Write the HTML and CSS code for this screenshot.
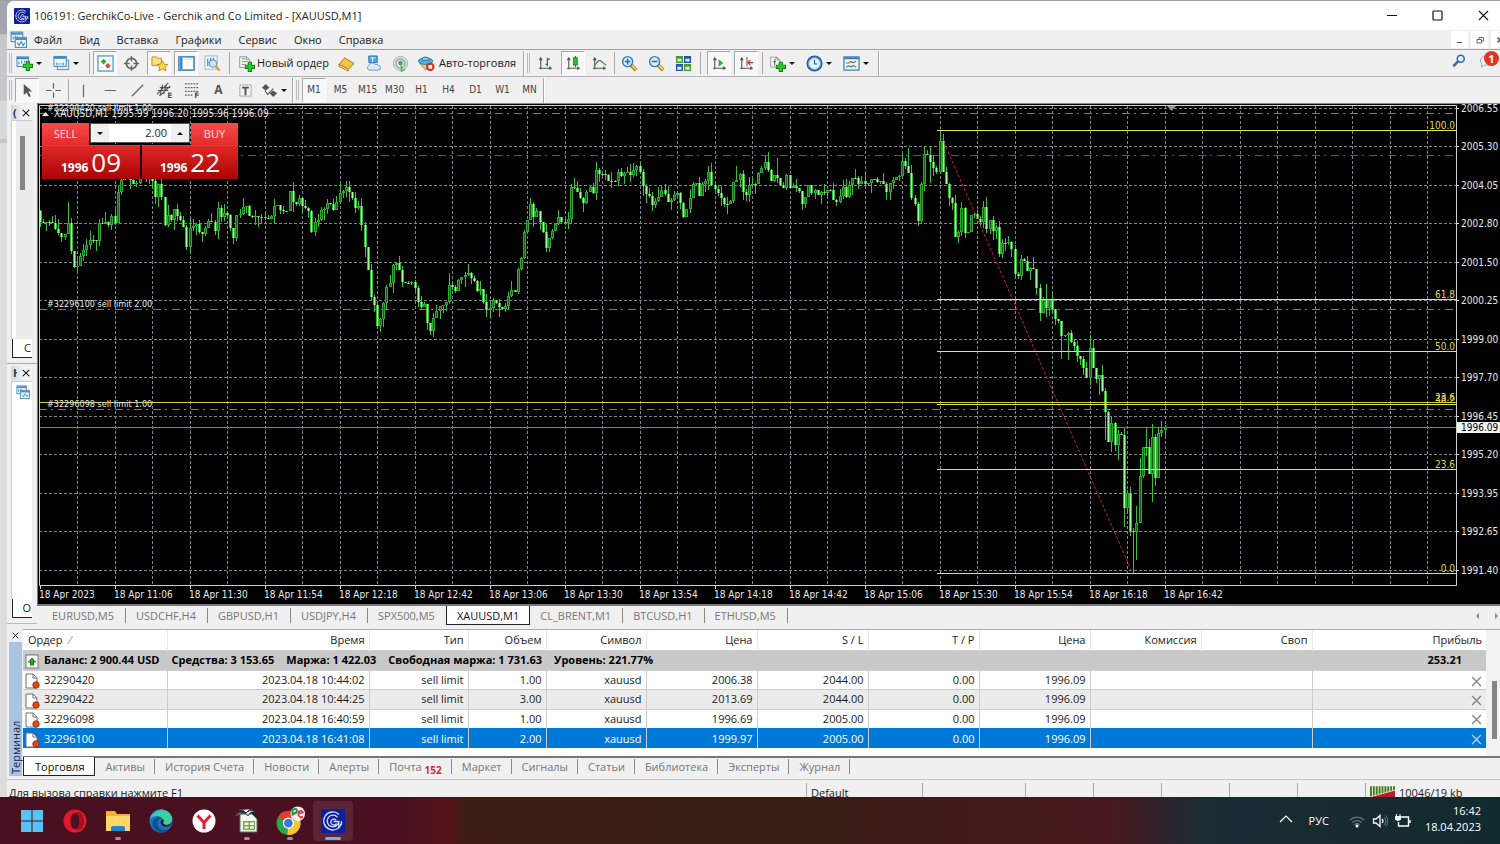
FILE: index.html
```html
<!DOCTYPE html>
<html lang="ru">
<head>
<meta charset="utf-8">
<title>106191: GerchikCo-Live - Gerchik and Co Limited - [XAUUSD,M1]</title>
<link rel="stylesheet" href="styles.css">
</head>
<body>
<svg class="defs" aria-hidden="true">
  <defs>
    <symbol id="logo" viewBox="0 0 24 24"><rect width="24" height="24" rx="1" fill="#0c1f9c"/><path d="M18 5.500A9 9 0 1 0 20.500 14M16.500 8.300A5.800 5.800 0 1 0 17.800 12.500H12.500M15 11a3 3 0 1 0 .5 3.500M20.500 12v4M17.800 12.500v5" fill="none" stroke="#d6dcf6" stroke-width="1.300"/></symbol>
    <symbol id="chartwin" viewBox="0 0 16 16"><rect x="1" y="1" width="11" height="9" fill="#eaf4fc" stroke="#4a8fc4"/><path d="M1 2.500h11" stroke="#4a8fc4" stroke-width="2"/><path d="M3 8V5M5 7.500V4.500M7 7V5" stroke="#4a8fc4"/><rect x="5" y="6" width="10.500" height="9.500" fill="#eaf4fc" stroke="#4a8fc4"/><path d="M5 7.500h10.500" stroke="#4a8fc4" stroke-width="2"/><path d="M7 11l1.500 2.500L10.500 10l2 3.500L14 11" fill="none" stroke="#4a8fc4"/></symbol>
    <symbol id="plus" viewBox="0 0 10 10"><path d="M3.500.5h3v3h3v3h-3v3h-3v-3h-3v-3h3z" fill="#2fd02a" stroke="#0b8412"/></symbol>
    <symbol id="page" viewBox="0 0 16 16"><path d="M1 1h9l4 4v10H1z" fill="#f4f4f4" stroke="#808080"/><path d="M10 1v4h4" fill="none" stroke="#808080"/></symbol>
    <symbol id="axes" viewBox="0 0 16 16"><path d="M3 2v12M1 13h13M1.500 4.500L3 2l1.500 2.500M12 11.500l2 1.500-2 1.500" fill="none" stroke="#555" stroke-width="1.200"/></symbol>
    <symbol id="lens" viewBox="0 0 18 18"><path d="M10.500 10.500l5.500 5.500" stroke="#a87d18" stroke-width="4"/><path d="M11 10.500l5 5" stroke="#f6d258" stroke-width="2"/><circle cx="7" cy="7" r="5.300" fill="#d7efff" stroke="#3579bd" stroke-width="1.500"/></symbol>
    <symbol id="order" viewBox="0 0 16 16"><path d="M2 1h7l4 4v10H2z" fill="#fff" stroke="#6d6d6d"/><path d="M9 1v4h4" fill="none" stroke="#6d6d6d"/><circle cx="12" cy="12" r="3.200" fill="#e14a18" stroke="#a02c10"/></symbol>
    <symbol id="cross" viewBox="0 0 10 10"><path d="M1 1l8 8M9 1L1 9" stroke="currentColor" stroke-width="1.300"/></symbol>
  </defs>
</svg>

<div class="desktop">
<div class="window">
  <header class="titlebar">
    <svg class="title-logo"><use href="#logo"/></svg>
    <h1 class="title">106191: GerchikCo-Live - Gerchik and Co Limited - [XAUUSD,M1]</h1>
    <div class="win-controls">
      <button aria-label="Свернуть"><svg viewBox="0 0 11 11"><path d="M1 5.500h10" stroke="#111"/></svg></button>
      <button aria-label="Развернуть"><svg viewBox="0 0 11 11"><rect x="1" y="1" width="9" height="9" rx="1" fill="none" stroke="#111" stroke-width="1.200"/></svg></button>
      <button aria-label="Закрыть"><svg viewBox="0 0 11 11"><path d="M1 1l9 9M10 1l-9 9" stroke="#111" stroke-width="1.100"/></svg></button>
    </div>
  </header>

  <nav class="menubar">
    <svg class="menu-icon"><use href="#chartwin"/></svg>
    <button>Файл</button><button>Вид</button><button>Вставка</button><button>Графики</button><button>Сервис</button><button>Окно</button><button>Справка</button>
    <div class="mdi">
      <button aria-label="Свернуть график"><svg viewBox="0 0 8 8"><path d="M1 6.500h5" stroke="#555" stroke-width="1.200"/></svg></button>
      <button aria-label="Восстановить график"><svg viewBox="0 0 8 8"><path d="M3 3V1.500h4.500V5H6M1 3.500h4.500V7H1z" fill="none" stroke="#667"/></svg></button>
      <button aria-label="Закрыть график"><svg viewBox="0 0 8 8"><path d="M1.500 1.500l5 5M6.500 1.500l-5 5" stroke="#456" stroke-width="1.500"/></svg></button>
    </div>
  </nav>

  <div class="toolbar toolbar-main">
    <span class="grip"></span>
    <button class="tool wide" aria-label="Новый график"><svg viewBox="0 0 18 18"><rect x="1" y="2" width="12" height="10" fill="#f5fbff" stroke="#3b82bd"/><path d="M1 3.500h12" stroke="#3b82bd" stroke-width="2"/><path d="M3 10V7M6 9V6M9 8V6" stroke="#3b82bd"/><use href="#plus" x="7" y="6" width="11" height="11"/></svg><i class="caret"></i></button>
    <button class="tool wide" aria-label="Профили"><svg viewBox="0 0 18 18"><rect x="4.500" y="5.500" width="12" height="10" fill="#dcecf8" stroke="#5a8db8"/><rect x="1" y="1.500" width="13" height="10.500" fill="#f2f8fd" stroke="#3b82bd"/><path d="M1 3h13" stroke="#3b82bd" stroke-width="2"/><path d="M3 9.500h9M4 8v3M11 8v3" stroke="#6b9bc2"/></svg><i class="caret"></i></button>
    <span class="sep"></span>
    <button class="tool on" aria-label="Обзор рынка"><svg viewBox="0 0 18 18"><rect x="1" y="1" width="16" height="16" fill="#fff" stroke="#5ea2d3" stroke-width="1.500"/><path d="M7 4l3 3-3 3-3-3z" fill="#2ba82d"/><path d="M11.500 8.500l3 3-3 3-3-3z" fill="#e0472a"/><path d="M3.500 13h4M11 5h4" stroke="#c9d9e6"/></svg></button>
    <button class="tool" aria-label="Окно данных"><svg viewBox="0 0 18 18"><circle cx="9" cy="9" r="5.500" fill="none" stroke="#666" stroke-width="1.800"/><path d="M9 1v6M9 11v6M1 9h6M11 9h6" stroke="#666" stroke-width="1.500"/></svg></button>
    <button class="tool on" aria-label="Навигатор"><svg viewBox="0 0 18 18"><path d="M1 2h5l1 1.500h4V11H1z" fill="#f7e283" stroke="#b39328"/><path d="M12 6l1.800 3.700 4 .4-3 2.700.9 4-3.700-2-3.600 2 .8-4-3-2.700 4-.4z" fill="#ffd84c" stroke="#b98a16"/></svg></button>
    <button class="tool on" aria-label="Терминал"><svg viewBox="0 0 18 18"><rect x="1" y="2" width="16" height="14" fill="#fff" stroke="#3b7dbb" stroke-width="1.600"/><path d="M3.500 3v12" stroke="#3b7dbb" stroke-width="2.500"/><path d="M7 4.500h8" stroke="#b7d3ea"/></svg></button>
    <button class="tool" aria-label="Тестер стратегий"><svg viewBox="0 0 18 18"><rect x="1" y="1" width="13" height="14" fill="#f4f8fb" stroke="#9bb5c9"/><path d="M4 4v8M7 3v5M10 3v6" stroke="#5a86ad" stroke-width="1.400"/><circle cx="9.500" cy="9" r="4" fill="#cfe7f7" stroke="#4f86b5"/><path d="M12.500 12l4 4.500" stroke="#d9a52e" stroke-width="2.500"/></svg></button>
    <span class="sep sep-far"></span>
    <button class="tool text"><svg viewBox="0 0 18 18"><use href="#page" x="1" y="0" width="13" height="15"/><path d="M4 4h4M4 7h6M4 10h4" stroke="#888"/><use href="#plus" x="7" y="7" width="11" height="11"/></svg>Новый ордер</button>
    <button class="tool" aria-label="MetaEditor"><svg viewBox="0 0 18 18"><path d="M1 10l6-7 10 6-6 6z" fill="#f3c545" stroke="#a8741a"/><path d="M1 10l10 5v2L1 12z" fill="#fff1c0" stroke="#a8741a"/></svg></button>
    <button class="tool" aria-label="Виртуальный хостинг"><svg viewBox="0 0 18 18"><path d="M4 1h9v7H4z" fill="#48a9e2" stroke="#2b78b4"/><path d="M6 3h5M8 3v4" stroke="#fff"/><path d="M4 16a3 3 0 0 1 0-5 4 4 0 0 1 7-1 3 3 0 0 1 3 1 2.500 2.500 0 0 1 0 5z" fill="#dce9f6" stroke="#6b93c0"/></svg></button>
    <button class="tool" aria-label="Сигналы"><svg viewBox="0 0 18 18"><circle cx="9" cy="9" r="7.500" fill="#dfe3e6" stroke="#a4adb3"/><circle cx="9" cy="9" r="4.800" fill="none" stroke="#8ba3b3" stroke-width="1.400"/><circle cx="9" cy="8.500" r="2.300" fill="#4aa54a"/><path d="M10 9v8a8 8 0 0 0 4-2" fill="none" stroke="#52b552" stroke-width="1.500"/></svg></button>
    <button class="tool text auto"><svg viewBox="0 0 18 18"><path d="M2 9l6 7 7-6-3-3z" fill="#f2cf4e" stroke="#ad8120"/><ellipse cx="8" cy="6.500" rx="7.500" ry="3.500" fill="#5cb0e0" stroke="#2e7bad"/><path d="M4 6a4 4 0 0 1 8 0z" fill="#7cc6ef" stroke="#2e7bad"/><circle cx="13" cy="12.500" r="4.500" fill="#d92b1c"/><rect x="11" y="10.500" width="4" height="4" fill="#fff"/></svg>Авто-торговля</button>
    <span class="edge"></span>
    <span class="grip"></span>
    <button class="tool" aria-label="Бары"><svg viewBox="0 0 18 18"><use href="#axes" x="1" y="1" width="16" height="16"/><path d="M11 3v9M9 10h2M11 4.500h2.500" stroke="#1c8f1c" stroke-width="1.400"/></svg></button>
    <button class="tool on" aria-label="Свечи"><svg viewBox="0 0 18 18"><use href="#axes" x="1" y="1" width="16" height="16"/><path d="M11 1v12" stroke="#128c12" stroke-width="1.300"/><rect x="9" y="3" width="4" height="7.500" fill="#2cc72c" stroke="#128c12"/></svg></button>
    <button class="tool" aria-label="Линия"><svg viewBox="0 0 18 18"><use href="#axes" x="1" y="1" width="16" height="16"/><path d="M3 12L8 6h2l6 5" fill="none" stroke="#4b8b4b" stroke-width="1.300"/></svg></button>
    <span class="sep"></span>
    <button class="tool" aria-label="Приблизить"><svg viewBox="0 0 18 18"><use href="#lens" width="18" height="18"/><path d="M4 7h6M7 4v6" stroke="#2a6cb0" stroke-width="1.600"/></svg></button>
    <button class="tool" aria-label="Отдалить"><svg viewBox="0 0 18 18"><use href="#lens" width="18" height="18"/><path d="M4 7h6" stroke="#2a6cb0" stroke-width="1.600"/></svg></button>
    <button class="tool" aria-label="Упорядочить окна"><svg viewBox="0 0 18 18"><path d="M1 1h7.500v7.500H1zM9.500 9.500H17V17H9.500z" fill="#4a9a28"/><path d="M9.500 1H17v7.500H9.500zM1 9.500h7.500V17H1z" fill="#2553b5"/><path d="M2.500 4h4.500v3H2.500zM11 4h4.500v3H11zM2.500 12.500h4.500v3H2.500zM11 12.500h4.500v3H11z" fill="#e2eef5"/></svg></button>
    <span class="sep sep-far"></span>
    <button class="tool on" aria-label="Автопрокрутка"><svg viewBox="0 0 18 18"><use href="#axes" x="1" y="1" width="16" height="16"/><path d="M8 4.500l5 4-5 4z" fill="#2cb32c"/></svg></button>
    <button class="tool on" aria-label="Сдвиг графика"><svg viewBox="0 0 18 18"><use href="#axes" x="1" y="1" width="16" height="16"/><path d="M9.500 2v10" stroke="#555"/><path d="M16 8h-5M13 5.500L10.500 8l2.500 2.500" fill="none" stroke="#c03a20" stroke-width="1.400"/></svg></button>
    <span class="sep sep-far"></span>
    <button class="tool wide" aria-label="Индикаторы"><svg viewBox="0 0 18 18"><use href="#page" x="1" y="1" width="12" height="13"/><path d="M8 4c-2 0-2 1-2 3v4M4.500 7h3" stroke="#555" fill="none"/><use href="#plus" x="7" y="7" width="11" height="11"/></svg><i class="caret"></i></button>
    <button class="tool wide" aria-label="Периоды"><svg viewBox="0 0 18 18"><circle cx="9" cy="9" r="7.200" fill="#e4f4ff" stroke="#1f5fa8" stroke-width="2.600"/><circle cx="9" cy="9" r="6.500" fill="none" stroke="#6fb4ec"/><path d="M9 5v4.500h3" fill="none" stroke="#456" stroke-width="1.200"/></svg><i class="caret"></i></button>
    <button class="tool wide" aria-label="Шаблоны"><svg viewBox="0 0 18 18"><rect x="1" y="2" width="16" height="14" fill="#eef7fd" stroke="#3b7dbb" stroke-width="1.300"/><path d="M1 3.500h16" stroke="#3b7dbb" stroke-width="2"/><path d="M3 8.500h3l2-1.500 3 1 3-1.500" fill="none" stroke="#b8502a" stroke-width="1.200"/><path d="M3 13l3-1.500 3 1 2-1.500 3 2" fill="none" stroke="#3b8d4b" stroke-width="1.200"/></svg><i class="caret"></i></button>
    <span class="edge"></span>
    <div class="tool-right">
      <button aria-label="Поиск"><svg viewBox="0 0 16 16"><circle cx="10" cy="5.500" r="4" fill="#dcefff" stroke="#3a66ae" stroke-width="1.800"/><path d="M7 8.500L1.500 14" stroke="#3a66ae" stroke-width="3"/></svg></button>
      <button class="chat" aria-label="Сообщения"><svg viewBox="0 0 16 16"><path d="M7 2a6 5.500 0 0 0-4 9v4l3-2.500a7 6 0 0 0 8-2z" fill="#eef1f8" stroke="#9aa0b0"/></svg><span class="badge">1</span></button>
    </div>
  </div>

  <div class="toolbar toolbar-draw">
    <span class="grip"></span>
    <button class="tool on" aria-label="Курсор"><svg viewBox="0 0 18 18"><path d="M5 2v12l3-3 2.500 5 2-1L10 10h4z" fill="#555"/></svg></button>
    <button class="tool" aria-label="Перекрестие"><svg viewBox="0 0 18 18"><path d="M9 1v6M9 11v6M1 9h6M11 9h6" stroke="#666" stroke-width="1.300"/></svg></button>
    <span class="sep"></span>
    <button class="tool" aria-label="Вертикальная линия"><svg viewBox="0 0 18 18"><path d="M9 3v13" stroke="#666" stroke-width="1.300"/></svg></button>
    <button class="tool" aria-label="Горизонтальная линия"><svg viewBox="0 0 18 18"><path d="M3 9h12" stroke="#666" stroke-width="1.300"/></svg></button>
    <button class="tool" aria-label="Трендовая линия"><svg viewBox="0 0 18 18"><path d="M3 15L15 3" stroke="#666" stroke-width="1.400"/></svg></button>
    <button class="tool" aria-label="Равноудаленный канал"><svg viewBox="0 0 18 18"><path d="M1 13L13 1M5 14L15 4M2 9h11M4 6h11M4 15L7 3M8 13l3-10" stroke="#555" stroke-width="1.200"/><text x="12" y="17" class="icon-letter">E</text></svg></button>
    <button class="tool" aria-label="Линии Фибоначчи"><svg viewBox="0 0 18 18"><path d="M2 2h14M2 6h14M2 10h14M2 14h9" stroke="#666" stroke-width="1.300" stroke-dasharray="2 1"/><text x="12" y="17" class="icon-letter">F</text></svg></button>
    <button class="tool letter">A</button>
    <button class="tool" aria-label="Текстовая метка"><svg viewBox="0 0 18 18"><rect x="3" y="3" width="12" height="12" fill="none" stroke="#666" stroke-dasharray="1 1"/><path d="M5.500 6h7M9 6v8" stroke="#555" stroke-width="2"/></svg></button>
    <button class="tool wide" aria-label="Стрелки"><svg viewBox="0 0 18 18"><path d="M5 2l4 4-4 3-4-3zM13 9l4 3-4 4-4-4z" fill="#555"/><path d="M4 9l3 4 6-6" fill="none" stroke="#555" stroke-width="1.200"/></svg><i class="caret"></i></button>
    <span class="edge"></span>
    <span class="grip"></span>
    <button class="tool period on">M1</button><button class="tool period">M5</button><button class="tool period">M15</button><button class="tool period">M30</button><button class="tool period">H1</button><button class="tool period">H4</button><button class="tool period">D1</button><button class="tool period">W1</button><button class="tool period">MN</button>
    <span class="edge"></span>
  </div>

  <main class="workspace">
    <aside class="side">
      <section class="side-panel">
        <header><span>(</span><button aria-label="Закрыть обзор рынка"><svg viewBox="0 0 10 10"><use href="#cross"/></svg></button></header>
        <div class="side-body scroll"><span class="thumb"></span></div>
        <button class="side-tab">С</button>
      </section>
      <section class="side-panel">
        <header><span>Н</span><button aria-label="Закрыть навигатор"><svg viewBox="0 0 10 10"><use href="#cross"/></svg></button></header>
        <div class="side-body"><svg class="side-icon"><use href="#chartwin"/></svg></div>
        <button class="side-tab">О</button>
      </section>
    </aside>

    <section class="chart-area">
      <div class="chart-frame">
        <svg id="chart" class="chart" viewBox="37 103 1463 501" role="img" aria-label="График XAUUSD, M1"></svg>
        <form class="trade">
          <button type="button" class="t-label">SELL</button>
          <div class="volume">
            <button type="button" aria-label="Меньше"><i class="caret"></i></button>
            <input type="text" value="2.00" aria-label="Объем">
            <button type="button" aria-label="Больше"><i class="caret up"></i></button>
          </div>
          <button type="button" class="t-label">BUY</button>
          <button type="button" class="t-price"><b>1996</b><span>09</span></button>
          <button type="button" class="t-price"><b>1996</b><span>22</span></button>
        </form>
      </div>
      <nav class="chart-tabs">
        <button>EURUSD,M5</button><button>USDCHF,H4</button><button>GBPUSD,H1</button><button>USDJPY,H4</button><button>SPX500,M5</button><button class="active">XAUUSD,M1</button><button>CL_BRENT,M1</button><button>BTCUSD,H1</button><button>ETHUSD,M5</button>
        <div class="tab-scroll"><button aria-label="Назад"><i class="caret left"></i></button><button aria-label="Вперед"><i class="caret right"></i></button></div>
      </nav>
    </section>
  </main>

  <section class="terminal">
    <div class="term-side">
      <button aria-label="Закрыть терминал"><svg viewBox="0 0 10 10"><use href="#cross"/></svg></button>
      <span class="term-name">Терминал</span>
    </div>
    <div class="term-main">
      <div class="term-body">
        <table class="orders">
          <colgroup><col class="c-order"><col class="c-time"><col class="c-type"><col class="c-vol"><col class="c-sym"><col class="c-num"><col class="c-num"><col class="c-num"><col class="c-num"><col class="c-num"><col class="c-num"><col class="c-profit"></colgroup>
          <thead><tr><th>Ордер <span class="sort">⁄</span></th><th>Время</th><th>Тип</th><th>Объем</th><th>Символ</th><th>Цена</th><th>S / L</th><th>T / P</th><th>Цена</th><th>Комиссия</th><th>Своп</th><th>Прибыль</th></tr></thead>
          <tbody>
            <tr class="balance"><td colspan="11"><svg class="row-icon" viewBox="0 0 16 16"><rect x="2" y="2" width="12" height="13" fill="#fff" stroke="#777"/><path d="M8 5l3.500 4h-2v3h-3V9h-2z" fill="#2ba52d" stroke="#117a17"/></svg><span>Баланс: 2 900.44 USD</span><span>Средства: 3 153.65</span><span>Маржа: 1 422.03</span><span>Свободная маржа: 1 731.63</span><span>Уровень: 221.77%</span></td><td class="total">253.21</td></tr>
            <tr><td><svg class="row-icon"><use href="#order"/></svg>32290420</td><td>2023.04.18 10:44:02</td><td>sell limit</td><td>1.00</td><td>xauusd</td><td>2006.38</td><td>2044.00</td><td>0.00</td><td>1996.09</td><td colspan="2"></td><td><button aria-label="Удалить ордер 32290420"><svg viewBox="0 0 10 10"><use href="#cross"/></svg></button></td></tr>
            <tr><td><svg class="row-icon"><use href="#order"/></svg>32290422</td><td>2023.04.18 10:44:25</td><td>sell limit</td><td>3.00</td><td>xauusd</td><td>2013.69</td><td>2044.00</td><td>0.00</td><td>1996.09</td><td colspan="2"></td><td><button aria-label="Удалить ордер 32290422"><svg viewBox="0 0 10 10"><use href="#cross"/></svg></button></td></tr>
            <tr><td><svg class="row-icon"><use href="#order"/></svg>32296098</td><td>2023.04.18 16:40:59</td><td>sell limit</td><td>1.00</td><td>xauusd</td><td>1996.69</td><td>2005.00</td><td>0.00</td><td>1996.09</td><td colspan="2"></td><td><button aria-label="Удалить ордер 32296098"><svg viewBox="0 0 10 10"><use href="#cross"/></svg></button></td></tr>
            <tr class="selected"><td><svg class="row-icon"><use href="#order"/></svg>32296100</td><td>2023.04.18 16:41:08</td><td>sell limit</td><td>2.00</td><td>xauusd</td><td>1999.97</td><td>2005.00</td><td>0.00</td><td>1996.09</td><td colspan="2"></td><td><button aria-label="Удалить ордер 32296100"><svg viewBox="0 0 10 10"><use href="#cross"/></svg></button></td></tr>
          </tbody>
        </table>
        <div class="term-scroll"><span class="thumb"></span></div>
      </div>
      <nav class="term-tabs">
        <button class="active">Торговля</button><button>Активы</button><button>История Счета</button><button>Новости</button><button>Алерты</button><button>Почта <b>152</b></button><button>Маркет</button><button>Сигналы</button><button>Статьи</button><button>Библиотека</button><button>Эксперты</button><button>Журнал</button>
      </nav>
    </div>
  </section>

  <footer class="status">
    <span class="s-help">Для вызова справки нажмите F1</span>
    <span class="s-profile">Default</span><span class="s-a"></span><span class="s-b"></span><span class="s-b"></span><span class="s-b"></span><span class="s-b"></span><span class="s-b"></span>
    <span class="s-net"><svg viewBox="0 0 26 14"><path d="M0 7h26" stroke="#3f7d1c" stroke-width="14" stroke-dasharray="2 1"/><path d="M0 14V11L26 4v10z" fill="#b3202c"/><path d="M0 11L26 4" stroke="#f0e0c0"/></svg>10046/19 kb</span>
  </footer>
</div>
</div>

<footer class="taskbar">
  <div class="apps">
    <button aria-label="Пуск"><svg viewBox="0 0 24 24"><path d="M1 1h10.500v10.500H1zM12.500 1H23v10.500H12.500zM1 12.500h10.500V23H1zM12.500 12.500H23V23H12.500z" fill="#55c3f7"/></svg></button>
    <button aria-label="Opera"><svg viewBox="0 0 24 24"><path fill-rule="evenodd" d="M12 .5a11.500 11.500 0 1 0 0 23 11.500 11.500 0 1 0 0-23zM12 4c3 0 4.500 3.500 4.500 8S15 20 12 20s-4.500-3.500-4.500-8S9 4 12 4z" fill="#e3182c"/><path d="M12 4c5-3 9 2 9 8s-4 11-9 8c3 0 4.500-3.500 4.500-8S15 4 12 4z" fill="#a3101f"/></svg></button>
    <button class="run" aria-label="Проводник"><svg viewBox="0 0 24 24"><path d="M0 2h9l2 3h13v17H0z" fill="#f3b32c"/><path d="M0 7h24v15H0z" fill="#ffd766"/><path d="M5 22v-3q0-2 2-2h10q2 0 2 2v3z" fill="#2583cc"/></svg></button>
    <button aria-label="Edge"><svg viewBox="0 0 24 24"><circle cx="12" cy="12" r="11.500" fill="#1873bd"/><path d="M1 10C3-1 19-3 23 8c1 5-2 8-6 8-5 0-2-2-3-5-2-5-9-5-13-1z" fill="#3fcf9d"/><path d="M1 10C3 2 11-2 17 2c-6-1-12 2-16 8z" fill="#32b2e5"/><path d="M13 9c-7 1-6 11 2 12 3 0 5-1 7-3-4 7-15 7-18-1-2-6 4-10 9-8z" fill="#0c4c91"/><path d="M14 10c2 3-1 4 1 5 2 2 6 1 8-2-1 4-5 6-9 4-3-2-3-6 0-7z" fill="#470f1d"/></svg></button>
    <button aria-label="Яндекс Браузер"><svg viewBox="0 0 24 24"><circle cx="12" cy="12" r="11.500" fill="#fff"/><path d="M5.500 6.500l6.500 7 6.500-7M12 13v7" fill="none" stroke="#e3202c" stroke-width="3"/></svg></button>
    <button class="run" aria-label="Таблицы"><svg viewBox="0 0 24 24"><path d="M5 5h12l5 5v13H5z" fill="#f3f5ef" stroke="#5c6b60"/><path d="M8 12h12v9H8z" fill="#6fb22e"/><path d="M9.500 13.500h4v2.500h-4zM15 13.500h4v2.500h-4zM9.500 17.500h4v2h-4zM15 17.500h4v2h-4z" fill="#fff"/><path d="M0 7q5-6 10-2 5-6 10-2-5-1-7 4-1-3-5-3-4 1-8 3zM4 1q4-1 7 3 3-4 7-4" fill="#dce7ee" stroke="#32454e"/></svg></button>
    <button class="run" aria-label="Chrome"><svg class="chrome" viewBox="0 0 28 28"><circle cx="12" cy="16" r="11.500" fill="#2ea44f"/><path d="M12 16L2 10A11.500 11.500 0 0 1 22.500 11z" fill="#e33b2e"/><path d="M12 16l10.500-5A11.500 11.500 0 0 1 11 27.500z" fill="#fbc62c"/><circle cx="12" cy="16" r="5.500" fill="#fff"/><circle cx="12" cy="16" r="4.200" fill="#3d78e0"/><circle cx="21" cy="7" r="7" fill="#f3f3f3"/><path d="M16 9V3q5-2 4 2-1 2-4 2" fill="none" stroke="#27924e" stroke-width="2"/><path d="M21 7l5-1q-1-3-4-1-2 5 3 5M23 11l3-1" fill="none" stroke="#e0343c" stroke-width="1.600"/></svg></button>
    <button class="current" aria-label="GerchikCo"><svg viewBox="0 0 24 24"><use href="#logo"/></svg></button>
  </div>
  <div class="tray">
    <button class="up-arrow" aria-label="Скрытые значки"><svg viewBox="0 0 14 14"><path d="M1 10l6-6 6 6" fill="none" stroke="#fff" stroke-width="1.200"/></svg></button>
    <button class="lang">РУС</button>
    <button class="net" aria-label="Сеть, звук и батарея">
      <svg viewBox="0 0 16 16"><path d="M1 7a10 10 0 0 1 14 0M3.500 9.500a6.500 6.500 0 0 1 9 0" fill="none" stroke="#62767a" stroke-width="1.300"/><path d="M5.500 11.500a4 4 0 0 1 5 0" fill="none" stroke="#8fa0a3"/><circle cx="8" cy="13" r="1.500" fill="#fff"/></svg>
      <svg viewBox="0 0 16 16"><path d="M1.500 6v4H4l4 3.500v-11L4 6z" fill="none" stroke="#fff" stroke-width="1.300"/><path d="M10 6q2 2 0 4" fill="none" stroke="#fff" stroke-width="1.200"/><path d="M12 4q4 4 0 8M14 2.500q4 5.500 0 11" fill="none" stroke="#6a7d80"/></svg>
      <svg viewBox="0 0 16 16"><path d="M6 4h7.500v9H3.500v-4" fill="none" stroke="#fff" stroke-width="1.400"/><path d="M15 7v3" stroke="#fff" stroke-width="1.500"/><path d="M1.500 1v3M5 1v3M.5 3.500h5v3l-2.500 1-2.500-1z" fill="#fff" stroke="#fff"/></svg>
    </button>
    <button class="clock"><span>16:42</span><span>18.04.2023</span></button>
  </div>
</footer>
<script src="chart.js"></script>
</body>
</html>
```
FILE: styles.css
```css
* { box-sizing: border-box; }
body {
  margin: 0;
  min-height: 100vh;
  overflow: hidden;
  background: #f0f0f0;
  color: #1b1b1b;
  font: 11px/16px "Open Sans", "Noto Sans", sans-serif;
}
button { margin: 0; padding: 0; border: 0; background: none; font: inherit; color: inherit; }
.defs { position: absolute; width: 0; height: 0; }
.desktop {
  padding-left: 7px;
  border-top: 1px solid #a0a0a4;
  background: linear-gradient(#a6a7ae 0 33px, #c6c7ca 33px 100px, #d9dadc 100px 138px, #c4c8cc 138px 142px, #dcdcdc 142px 100%);
}
.window { overflow: hidden; background: #f0f0f0; border-top-left-radius: 7px; height: 796px; }

.titlebar { display: flex; align-items: center; height: 29px; padding-left: 7px; background: #fff; }
.title-logo { width: 16px; height: 16px; margin-right: 4px; }
.title { margin: 0; font-size: 11px; font-weight: 400; color: #222; white-space: nowrap; }
.win-controls { display: flex; margin: 0 -6px 0 auto; }
.win-controls button { display: grid; place-items: center; width: 46px; height: 28px; }
.win-controls svg { width: 11px; height: 11px; }

.menubar { display: flex; align-items: center; height: 20px; padding-left: 3px; border-bottom: 1px solid #a2a2a2; }
.menu-icon { width: 17px; height: 17px; margin-right: 7px; }
.menubar > button { margin-right: 17px; }
.mdi { display: flex; gap: 3px; margin: 0 -8px 0 auto; }
.mdi button { display: grid; place-items: center; width: 17px; height: 17px; background: #fff; }
.mdi svg { width: 8px; height: 8px; }

.toolbar { display: flex; align-items: center; height: 27px; border-bottom: 1px solid #b4b4b4; }
.toolbar-draw { height: 26px; border-bottom: 0; }
.grip { width: 3px; height: 20px; margin: 0 2px; border-left: 1px solid #bbb; border-right: 1px solid #bbb; }
.toolbar-draw .grip { margin: 0 1px 0 2px; }
.tool { display: flex; flex: none; align-items: center; justify-content: center; width: 27px; height: 24px; }
.tool svg { flex: none; width: 17px; height: 17px; }
.tool.on { width: 24px; margin: 0 1px 0 2px; border: 1px solid; border-color: #a8a8a8 #fff #fff #a8a8a8; background: #f7f7f7; }
.tool.wide { justify-content: flex-start; width: 37px; gap: 3px; padding-left: 2px; }
.toolbar-draw .tool.wide { width: 33px; }
.tool.text { width: auto; gap: 2px; padding: 0 4px; white-space: nowrap; }
.tool.auto { gap: 4px; padding-right: 7px; }
.tool.period { font: 10px/14px "DejaVu Sans Condensed", "DejaVu Sans", sans-serif; color: #444; }
.tool.letter { font-weight: 700; font-size: 12px; color: #555; }
.icon-letter { font: 700 8px "DejaVu Sans", sans-serif; fill: #555; }
.sep { width: 1px; height: 22px; margin: 0 1px; background: #a8a8a8; }
.sep-far { margin: 0 4px 0 3px; }
.edge { width: 2px; height: 25px; border-left: 1px solid #a8a8a8; border-right: 1px solid #fff; }
.caret { display: block; border: 3px solid transparent; border-top-color: #111; border-bottom-width: 0; }
.caret.up { border-bottom: 3px solid #111; border-top-width: 0; }
.caret.left { border: 3px solid transparent; border-right-color: #888; border-left-width: 0; }
.caret.right { border: 3px solid transparent; border-left-color: #888; border-right-width: 0; }
.tool-right { display: flex; gap: 11px; margin: 0 6px 0 auto; }
.tool-right button { position: relative; width: 16px; height: 18px; }
.tool-right svg { width: 14px; height: 14px; }
.badge { position: absolute; left: 6px; top: -3px; width: 15px; height: 15px; border-radius: 50%; background: #e03424; color: #fff; font: 700 11px/15px "Open Sans", sans-serif; text-align: center; }

.workspace { display: flex; height: 526px; }
.side { display: flex; flex: none; flex-direction: column; width: 30px; margin-bottom: 5px; border-bottom: 1px solid #bbb; }
.side-panel { display: flex; flex: 1; flex-direction: column; min-height: 0; padding: 2px 5px 5px 4px; border-bottom: 1px solid #aaa; }
.side-panel:last-child { border-bottom: 0; }
.side-panel header { display: flex; align-items: center; justify-content: space-between; height: 15px; padding: 0 2px 0 2px; overflow: hidden; background: linear-gradient(90deg, #c8d9e8, #f2f2f2 60%); font-weight: 700; }
.side-panel header span { width: 4px; overflow: hidden; color: #334; }
.side-panel header button { display: grid; }
.side-panel header svg { width: 8px; height: 8px; color: #111; }
.side-body { flex: 1; padding: 3px 4px; background: #fff; border: 1px solid #ccc; border-right: 0; border-bottom: 0; overflow: hidden; }
.side-body.scroll { padding: 15px 4px 0 8px; background: linear-gradient(90deg, #fff 4px, #ececec 4px); }
.side-body.scroll .thumb { display: block; width: 5px; height: 54px; background: #858585; }
.side-icon { width: 14px; height: 14px; }
.side-tab { width: 20px; height: 19px; margin-left: 1px; padding-right: 1px; border: 1px solid #222; border-width: 0 0 1px 1px; background: #fff; text-align: right; overflow: hidden; }

.chart-area { flex: 1; min-width: 0; }
.chart-frame { position: relative; background: #000; }
.chart { display: block; width: 100%; height: auto; background: #000; }
.chart text { font: 10px "DejaVu Sans Condensed", "DejaVu Sans", sans-serif; fill: #e8e8e8; }
.chart .order-label { font-size: 9px; }
.chart .fib-label { fill: #dede3c; }
.chart .bid-label { fill: #000; }
.trade { position: absolute; left: 5px; top: 20px; display: grid; grid-template-columns: 47px 51px 51px 47px; width: 196px; color: #fff; }
.t-label { height: 22px; background: linear-gradient(#f84a4a, #e42c2c); font-size: 11px; color: #ffe0e0; }
.volume { display: flex; grid-column: span 2; height: 20px; padding: 1px; margin: 0 1px 2px; background: #555; }
.volume button { display: grid; place-items: center; width: 18px; background: #f0f0f0; }
.volume input { flex: 1; min-width: 0; padding: 0 4px; border: 0; text-align: right; font: inherit; background: #fff; color: #222; }
.t-price { display: flex; align-items: flex-end; justify-content: center; gap: 3px; grid-column: span 2; height: 34px; padding-bottom: 3px; border-top: 1px solid #c84848; background: linear-gradient(#e02828, #aa0404); }
.t-price:last-child { border-left: 2px solid #200; }
.t-price b { font-size: 12px; line-height: 16px; }
.t-price span { font-size: 26px; line-height: 28px; }

.chart-tabs { display: flex; align-items: center; height: 25px; padding: 0 0 4px 5px; border-top: 2px solid #777; color: #777; }
.chart-tabs > button { height: 15px; padding: 0 11px 0 10px; border-right: 1px solid #888; line-height: 15px; white-space: nowrap; }
.chart-tabs > .active { height: 19px; padding: 0 10px; margin-left: -1px; border: 1px solid #222; border-top: 0; background: #fff; color: #111; line-height: 17px; }
.tab-scroll { display: flex; gap: 16px; margin: 0 2px 0 auto; }

.terminal { display: flex; height: 151px; border-bottom: 1px solid #c4c4c4; }
.term-side { display: flex; flex: none; flex-direction: column; align-items: center; width: 16px; padding-bottom: 3px; }
.term-side button { display: grid; place-items: center; height: 13px; color: #111; }
.term-side svg { width: 7px; height: 7px; }
.term-name { flex: 1; width: 13px; padding-top: 2px; background: #a9c4e0; color: #224; writing-mode: vertical-rl; transform: rotate(180deg); line-height: 13px; }
.term-main { flex: 1; min-width: 0; }
.term-body { display: flex; height: 127px; border-top: 1px solid #aaa; background: #fff; }
.orders { flex: 1; min-width: 0; table-layout: fixed; border-collapse: collapse; height: 118px; }
.c-order { width: 144px; } .c-time { width: 202px; } .c-type { width: 99px; } .c-vol { width: 78px; } .c-sym { width: 100px; } .c-num { width: 111px; }
.orders th, .orders td { padding: 0 4px; text-align: right; white-space: nowrap; line-height: 18px; border-right: 1px solid #ccc; }
.orders th { height: 20px; font-weight: 400; border-right-color: #e8e8e8; }
.orders td { height: 19px; border-top: 1px solid #ccc; }
.orders th:first-child { padding-left: 5px; }
.orders th:first-child, .orders td:first-child { text-align: left; }
.orders td:first-child { padding-left: 1px; }
.orders th:last-child, .orders td:last-child { border-right: 0; }
.orders td button { display: inline-grid; vertical-align: middle; color: #888; }
.orders td button svg { width: 11px; height: 11px; }
.orders tr:nth-child(odd) td { background: #ebebeb; }
.orders tr:nth-child(even) td { background: #fff; }
.orders tr.balance td { height: 20px; border-right: 0; background: #c8c8c8; font-weight: 700; color: #000; }
.orders .balance span { margin-right: 12px; }
.orders .balance .total { padding-right: 24px; }
.orders tr.selected td { background: #0078d7; color: #fff; border-top-color: #0078d7; }
.orders tr.selected td button { color: #bcd; }
.row-icon { width: 16px; height: 16px; margin-right: 4px; vertical-align: middle; }
.sort { padding-left: 4px; color: #888; }
.term-scroll { width: 14px; padding: 51px 0 0 6px; background: #f2f2f2; }
.term-scroll .thumb { display: block; width: 5px; height: 58px; background: #858585; }
.term-tabs { display: flex; align-items: center; height: 23px; padding-bottom: 4px; border-top: 2px solid #777; color: #777; }
.term-tabs button { height: 15px; padding: 0 9px; border-right: 1px solid #888; line-height: 15px; white-space: nowrap; }
.term-tabs button:nth-child(n+2) { padding-right: 9px; padding-left: 10px; }
.term-tabs .active { height: 19px; padding: 0 10px 0 11px; border: 1px solid #222; border-top: 0; background: #fff; color: #111; line-height: 17px; }
.term-tabs b { font-size: 10px; color: #d02c34; vertical-align: -3px; }

.status { display: flex; height: 17px; padding-top: 3px; overflow: hidden; color: #222; }
.status span { padding-left: 4px; border-left: 1px solid #aaa; white-space: nowrap; line-height: 20px; }
.status .s-help { flex: 1; padding-left: 2px; border: 0; }
.status .s-profile { width: 116px; }
.status .s-a { width: 103px; }
.status .s-b { width: 68px; }
.status .s-net { display: flex; width: 135px; gap: 4px; }
.status .s-net svg { width: 25px; height: 14px; margin-top: 3px; }

.taskbar { display: flex; align-items: center; justify-content: space-between; height: 47px; padding: 0 19px 0 12px; background: linear-gradient(90deg, #48101f 0, #4a1020 27%, #561219 30%, #3b1d14 31%, #371d14 55%, #421a1a 66%, #48181e 74%, #1b2c33 80%, #112a2e 100%); color: #fff; }
.apps { display: flex; gap: 3px; }
.apps button { position: relative; display: grid; place-items: center; width: 40px; height: 40px; border-radius: 4px; }
.apps svg { width: 24px; height: 24px; }
.apps svg.chrome { width: 29px; height: 34px; }
.apps .run::after, .apps .current::after { content: ""; position: absolute; left: 17px; bottom: 1px; width: 6px; height: 3px; border-radius: 2px; background: #a38f96; }
.apps .current { background: #5a2536; }
.apps .current::after { left: 12px; width: 16px; background: #5cb8f5; }
.tray { display: flex; align-items: center; }
.tray button { height: 36px; }
.up-arrow { width: 14px; }
.up-arrow svg { width: 14px; height: 14px; }
.lang { margin-left: 16px; }
.net { display: flex; align-items: center; gap: 7px; margin-left: 20px; }
.net svg { width: 16px; height: 16px; }
.clock { display: flex; flex-direction: column; align-items: flex-end; margin-left: 14px; line-height: 16px; }
```
FILE: chart.js
```js
(function () {
  const svg = document.getElementById('chart');
  const NS = 'http://www.w3.org/2000/svg';
  const LEFT = 39, RIGHT = 1456, TOP = 106, BOTTOM = 585, STEP = 3.125;

  function add(name, attrs, text) {
    const el = document.createElementNS(NS, name);
    for (const k in attrs) el.setAttribute(k, attrs[k]);
    if (text) el.textContent = text;
    svg.appendChild(el);
    return el;
  }
  function line(x1, y1, x2, y2, stroke, extra) {
    return add('line', Object.assign({ x1, y1, x2, y2, stroke }, extra || {}));
  }

  // Grid and axis labels
  for (let k = 1; k < 38; k++) {
    const x = Math.floor(40 + k * 37.5) + 0.5;
    line(x, TOP, x, BOTTOM, '#7d858f', { 'stroke-dasharray': '3 2' });
  }
  const prices = ['2006.55', '2005.30', '2004.05', '2002.80', '2001.50', '2000.25', '1999.00', '1997.70', '1996.45', '1995.20', '1993.95', '1992.65', '1991.40'];
  prices.forEach((p, i) => {
    const y = Math.round(107.5 + i * 38.5) + 0.5;
    line(LEFT, y, RIGHT, y, '#7d858f', { 'stroke-dasharray': '3 2' });
    line(RIGHT, y, RIGHT + 3, y, '#ddd');
    add('text', { x: 1461, y: y + 3 }, p);
  });
  const times = ['2023', '11:06', '11:30', '11:54', '12:18', '12:42', '13:06', '13:30', '13:54', '14:18', '14:42', '15:06', '15:30', '15:54', '16:18', '16:42'];
  times.forEach((t, i) => {
    const x = 39 + i * 75;
    line(x + 1.5, BOTTOM, x + 1.5, BOTTOM + 4, '#ddd');
    add('text', { x, y: 598 }, '18 Apr ' + t);
  });

  // Pending order levels
  const dash = { 'stroke-dasharray': '8 4 2 5' };
  [113.5, 309.5, 409.5].forEach(y => line(LEFT, y, RIGHT, y, '#4f9a4f', dash));
  line(LEFT, 155.5, RIGHT, 155.5, '#d82424', dash);
  line(LEFT, 427.5, RIGHT, 427.5, '#777b82');

  // Closing levels of each minute bar, as chart ordinates
  const close = [222,223,222,222,223,229,233,237,234,223,251,267,266,256,250,245,240,240,241,223,223,222,225,216,223,192,180,178,175,180,184,183,178,172,175,178,
    181,197,184,197,225,215,220,209,216,220,227,247,228,226,224,232,234,228,221,222,231,208,217,213,215,228,238,215,214,207,206,216,217,216,217,217,
    218,219,216,206,205,210,211,211,191,202,204,198,206,208,211,232,222,220,210,209,203,204,210,202,
    193,191,187,192,198,208,206,225,247,270,297,305,326,319,303,287,283,265,263,270,282,283,283,282,288,302,307,304,323,331,318,311,306,305,302,285,287,291,280,277,275,273,278,281,291,289,302,310,
    308,300,303,307,309,306,296,290,292,269,258,232,220,204,217,211,222,232,248,238,231,224,217,222,223,219,187,188,192,198,203,192,187,193,170,174,174,175,181,181,181,172,176,173,172,175,170,166,
    172,186,194,196,205,201,197,190,194,202,200,195,193,203,217,209,198,184,183,196,184,181,172,185,189,193,198,204,204,201,182,180,174,192,195,185,184,184,173,168,162,170,181,175,178,185,188,175,
    188,186,188,191,204,197,185,193,190,195,192,193,190,190,200,202,196,187,197,185,178,178,184,181,184,183,179,179,182,181,184,192,183,180,177,176,161,166,173,198,204,221,184,154,155,162,168,172,
    141,172,184,198,203,237,232,208,233,232,215,214,219,222,207,229,220,231,227,254,243,243,242,249,274,276,259,261,271,268,269,288,313,300,308,300,309,319,321,336,
    335,333,342,346,356,359,368,378,348,368,379,375,391,412,442,423,445,434,435,508,493,531,532,523,476,447,447,474,437,478,433,430,427];
  const highs = { 0: 210, 9: 202, 99: 181, 115: 256, 131: 273, 137: 264, 158: 202, 214: 166, 223: 166, 232: 156, 236: 158, 278: 148, 288: 130, 303: 197, 318: 257, 322: 284, 336: 335, 347: 427, 351: 506, 352: 458, 354: 427, 356: 424, 359: 421 };
  const lows = { 12: 271, 47: 250, 62: 244, 109: 332, 125: 335, 144: 318, 163: 252, 174: 212, 196: 211, 206: 218, 244: 210, 281: 226, 285: 183, 294: 243, 327: 359, 329: 360, 332: 362, 339: 395, 341: 440, 345: 460, 347: 527, 350: 574, 351: 560, 356: 502 };
  let seed = 17;
  function tail() {
    seed = (seed * 1103515245 + 12345) % 2147483648;
    const r = seed / 2147483648;
    return Math.round(r * r * 10);
  }
  close.forEach((c, i) => {
    const open = i ? close[i - 1] : 211;
    const top = Math.min(open, c), bottom = Math.max(open, c);
    const x = Math.floor(40 + i * STEP);
    const height = Math.max(1, bottom - top);
    const hi = highs[i] || top - tail(), lo = lows[i] || bottom + tail();
    line(x + 0.5, hi, x + 0.5, lo, '#3cc03c');
    if (c < open) {
      add('rect', { x: x - 1, y: top, width: 3, height, fill: '#2fa82f' });
      if (height > 2) add('rect', { x, y: top + 1, width: 1, height: height - 2, fill: '#0c640c' });
    } else {
      add('rect', { x: x - 1, y: top, width: 3, height, fill: '#33b433' });
      add('rect', { x, y: top, width: 1, height, fill: '#98ff98' });
    }
  });

  // Fibonacci levels
  line(942, 138, 1132, 572, '#c02a20', { 'stroke-dasharray': '3 2' });
  line(LEFT, 402.5, RIGHT, 402.5, '#d2cc3c');
  [[130, '100.0'], [299, '61.8'], [351, '50.0'], [404, '38.2'], [469, '23.6'], [573, '0.0']].forEach(([y, t]) => {
    line(937, y + 0.5, RIGHT, y + 0.5, '#e6e64a');
    add('text', { x: 1455, y: y - 1, 'text-anchor': 'end', class: 'fib-label' }, t);
  });
  add('text', { x: 1455, y: 401, 'text-anchor': 'end', class: 'fib-label' }, '23.6');

  // Frame, captions and bid price
  add('rect', { x: 37, y: 103, width: 1463, height: 1, fill: '#8a8a8a' });
  line(37.5, 103, 37.5, 604, '#777');
  add('path', { d: 'M39.5 585.5V105.5H1456.5V585.5H39.5', fill: 'none', stroke: '#cfcfcf' });
  add('path', { d: 'M1167 106h9l-4.500 5z', fill: '#8d969c' });
  add('text', { x: 47, y: 111, class: 'order-label' }, '#32290420 sell limit 1.00');
  add('path', { d: 'M42 116l3.500-4 3.500 4z', fill: '#e8e8e8' });
  add('text', { x: 54, y: 117 }, 'XAUUSD,M1  1995.99 1996.20 1995.96 1996.09');
  add('text', { x: 47, y: 307, class: 'order-label' }, '#32296100 sell limit 2.00');
  add('text', { x: 47, y: 407, class: 'order-label' }, '#32296098 sell limit 1.00');
  add('rect', { x: 1457, y: 422, width: 43, height: 11, fill: '#f4f4f4' });
  add('text', { x: 1461, y: 431, class: 'bid-label' }, '1996.09');
})();
```
